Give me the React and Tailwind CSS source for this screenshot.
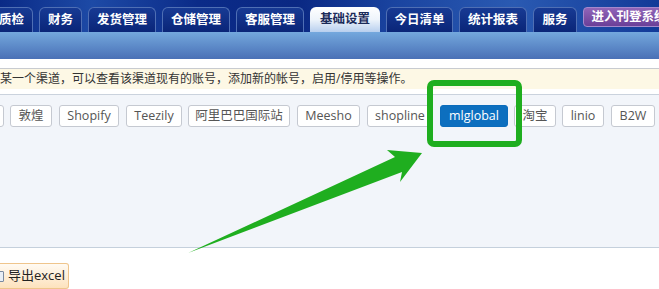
import React from "react";

const tabs = [
  { label: "质检", w: 43, ml: -10 },
  { label: "财务", w: 43 },
  { label: "发货管理", w: 68 },
  { label: "仓储管理", w: 68 },
  { label: "客服管理", w: 68 },
  { label: "基础设置", w: 70, active: true },
  { label: "今日清单", w: 67 },
  { label: "统计报表", w: 68 },
  { label: "服务", w: 44 },
];

const channels = [
  { label: "", w: 42, ml: -38 },
  { label: "敦煌", w: 42, ml: 6 },
  { label: "Shopify", w: 60, ml: 7 },
  { label: "Teezily", w: 56, ml: 7 },
  { label: "阿里巴巴国际站", w: 102, ml: 6 },
  { label: "Meesho", w: 63, ml: 7 },
  { label: "shopline", w: 66, ml: 7 },
  { label: "mlglobal", w: 68, ml: 7, active: true },
  { label: "淘宝", w: 42, ml: 6 },
  { label: "linio", w: 42, ml: 6 },
  { label: "B2W", w: 44, ml: 7 },
];

const TopNav = () => (
  <div className="flex h-[32px] items-end gap-[6px] overflow-hidden bg-[linear-gradient(90deg,#0a2a86_0%,#1d4aa6_14%,#0b2b88_30%,#0a2883_45%,#1a44a0_60%,#2a5ab2_78%,#123a98_100%)]">
    {tabs.map((t) => (
      <div
        key={t.label}
        style={{ width: t.w, marginLeft: t.ml || 0 }}
        className={
          t.active
            ? "flex h-[25px] shrink-0 items-center justify-center rounded-t-[6px] bg-gradient-to-b from-white via-[#eef4fb] to-[#b8cfee] text-[12.5px] font-bold text-[#1b2b5a]"
            : "flex h-[25px] shrink-0 items-center justify-center rounded-t-[6px] border border-b-0 border-[#4f6fb4] bg-gradient-to-b from-[#173a94] to-[#0a2578] text-[12.5px] font-bold text-white"
        }
      >
        {t.label}
      </div>
    ))}
    <div className="mb-[5px] flex h-[20px] w-[92px] shrink-0 items-center justify-center self-end rounded-[4px] border border-[#a488cc] bg-gradient-to-b from-[#9165b8] to-[#6b3f98] text-[12.5px] font-bold whitespace-nowrap text-white">
      进入刊登系统
    </div>
  </div>
);

const ChannelButton = ({ c }) => (
  <div
    style={{ width: c.w, marginLeft: c.ml }}
    className={
      c.active
        ? "flex h-[22px] shrink-0 items-center justify-center rounded-[3px] border border-[#0b6cbc] bg-[#0d6fbf] text-[12.5px] text-white whitespace-nowrap"
        : "flex h-[22px] shrink-0 items-center justify-center rounded-[3px] border border-[#c5c9d1] bg-white text-[12.5px] text-[#555] whitespace-nowrap"
    }
  >
    {c.label}
  </div>
);

const Annotation = () => (
  <svg
    className="pointer-events-none absolute left-0 top-0"
    width="659"
    height="289"
    viewBox="0 0 659 289"
  >
    <rect x="430" y="83" width="89" height="61" rx="4" fill="none" stroke="#1fae1f" strokeWidth="6" />
    <polygon points="188,253 395,157 387,150 422,153 400,182 402,172" fill="#1fae1f" />
  </svg>
);

export default function App() {
  return (
    <div className="relative h-[289px] w-[659px] overflow-hidden bg-white font-['Open_Sans','Noto_Sans_CJK_SC',sans-serif]">
      <TopNav />
      <div className="h-[27px] bg-gradient-to-b from-[#74a8dd] to-[#4a70b6]" />
      <div className="h-[9px] bg-white" />

      <div className="h-[21px] border-t border-[#c8cbd0] bg-[#fdf8e5] text-[12px] leading-[20px] whitespace-nowrap text-[#333]">
        某一个渠道，可以查看该渠道现有的账号，添加新的帐号，启用/停用等操作。
      </div>
      <div className="h-[6px] border-b border-[#cad2dd] bg-white" />

      <div className="h-[153px] border-b border-[#c5d0dc] bg-[#f2f5fa] pt-[10px]">
        <div className="flex">
          {channels.map((c, i) => (
            <ChannelButton key={i} c={c} />
          ))}
        </div>
      </div>

      <div className="pt-[15px]">
        <div className="flex h-[26px] w-[69px] items-center rounded-r-[3px] border border-l-0 border-[#efc58c] bg-gradient-to-b from-[#fffaf2] to-[#fde2bd] text-[13px] font-normal text-[#222]">
          <span className="-ml-[6px] mr-[4px] inline-block h-[11px] w-[10px] rounded-[1px] border border-[#7a8aa0] bg-[#e8eef6]" />
          导出excel
        </div>
      </div>

      <Annotation />
    </div>
  );
}
